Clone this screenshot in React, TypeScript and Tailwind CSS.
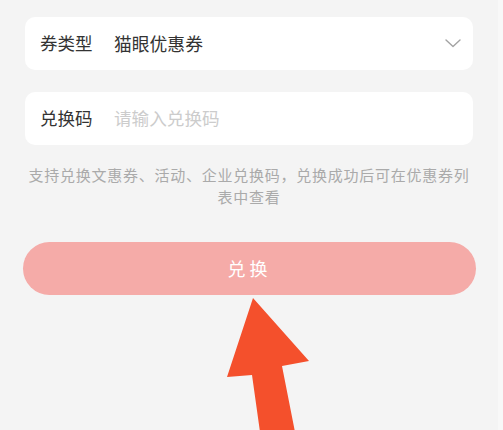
import React from "react";

const font = { fontFamily: '"Noto Sans CJK SC", "Noto Sans", sans-serif' };

function Chevron() {
  return (
    <svg width="16" height="9" viewBox="0 0 16 9" fill="none">
      <path d="M1 1l7 6.5L15 1" stroke="#a3a3a3" strokeWidth="1.4" strokeLinecap="round" strokeLinejoin="round" />
    </svg>
  );
}

function Row({ label, children }: { label: string; children: React.ReactNode }) {
  return (
    <div className="flex h-[53px] items-center rounded-[10px] bg-white pl-[15px] pr-[12px]">
      <span className="w-[74px] shrink-0 text-[17.5px] text-[#333333]">{label}</span>
      {children}
    </div>
  );
}

export default function App() {
  return (
    <div className="relative flex h-[430px] w-[503px] overflow-hidden bg-[#f4f4f4]" style={font}>
      <div className="w-[498px] shrink-0 px-[25px] pt-[17px]">
        <Row label="券类型">
          <span className="flex-1 text-[17.8px] text-[#333333]">猫眼优惠券</span>
          <Chevron />
        </Row>

        <div className="mt-[22px]">
          <Row label="兑换码">
            <span className="flex-1 text-[17.6px] text-[#cccccc]">请输入兑换码</span>
          </Row>
        </div>

        <p className="mt-[19px] whitespace-nowrap text-center text-[15px] leading-[22px] tracking-[0.75px] text-[#aaaaaa]">
          支持兑换文惠券、活动、企业兑换码，兑换成功后可在优惠券列
          <br />
          表中查看
        </p>

        <button className="-mx-[2px] mt-[34px] flex h-[53px] w-[453px] items-center justify-center rounded-full bg-[#f5aba8] text-[18px] tracking-[4px] text-white">
          兑换
        </button>
      </div>
      <div className="flex-1 bg-[#f8f8f8]" />

      {/* annotation arrow over the page */}
      <svg className="absolute left-0 top-0" width="503" height="430" viewBox="0 0 503 430">
        <polygon
          points="253,298 309,361 282,366 295,432 260,432 252,375 227,377"
          fill="#f4502c"
        />
      </svg>
    </div>
  );
}
